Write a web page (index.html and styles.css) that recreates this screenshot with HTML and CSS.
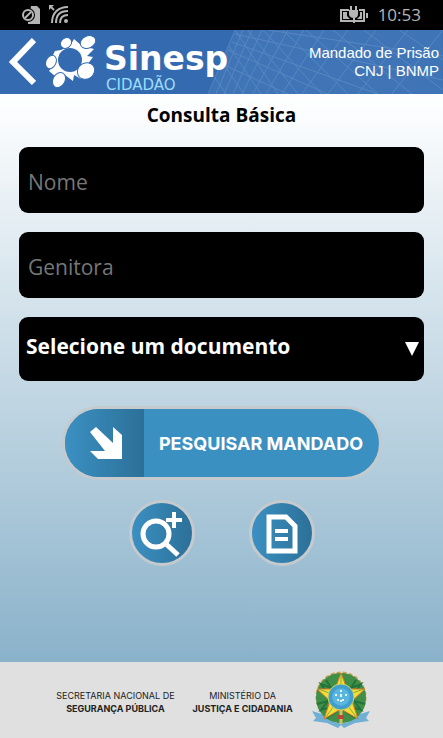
FILE: index.html
```
<!DOCTYPE html>
<html lang="pt-BR">
<head>
  <meta charset="UTF-8" />
  <meta name="viewport" content="width=device-width, initial-scale=1.0"/>
  <title>Sinesp Cidadão - Mandado de Prisão</title>
  <link rel="stylesheet" href="styles.css">
</head>
<body>
  <div class="status-bar">
    <svg class="status-icons" viewBox="0 0 48 20" width="48" height="20" aria-hidden="true">
      <path d="M9 1h6l3 3v15H6v-3z" fill="#b5b5b5"/>
      <circle cx="6" cy="10" r="7" fill="#000"/>
      <circle cx="6" cy="10" r="5" fill="none" stroke="#b5b5b5" stroke-width="2"/>
      <path d="M3 13l6-6" stroke="#b5b5b5" stroke-width="2"/>
      <g fill="none" stroke="#b5b5b5" stroke-width="2">
        <path d="M46 2C36 2 30 8 30 18"/>
        <path d="M46 6C38 6 34 10 34 18"/>
        <path d="M46 10C41 10 38 13 38 18"/>
        <path d="M28 1l4 4"/>
      </g>
      <path d="M27 0h5l-5 5z" fill="#b5b5b5"/>
      <circle cx="44" cy="16" r="2" fill="#b5b5b5"/>
    </svg>
    <div class="status-right">
      <svg viewBox="0 0 30 18" width="30" height="18" aria-hidden="true">
        <path d="M10 4H2v11h23V4h-5" fill="none" stroke="#b5b5b5" stroke-width="2"/>
        <path d="M4 6h4v4l3 3H4zM23 6h-2v4l-3 3h5z" fill="#b5b5b5"/>
        <path d="M10 4h9v4c0 3-2 4-4 4s-5-1-5-4zM11 0h2v5h-2zM16 0h2v5h-2zM14 11h2v6h-2zM27 7h2v5h-2z" fill="#b5b5b5"/>
      </svg>
      <span class="clock">10:53</span>
    </div>
  </div>

  <header class="header">
    <svg class="header-grid" viewBox="0 0 235 64" preserveAspectRatio="none" aria-hidden="true">
      <path d="M27 0h208v64H0z" fill="#4a80bd" opacity=".5"/>
      <g stroke="#8ab0d8" stroke-width="1" opacity=".3" fill="none">
        <path d="M27 0L0 64M35 0L8 64M44 0L16 64M54 0L25 64M66 0L34 64M80 0L45 64M96 0L58 64M116 0L74 64M140 0L94 64M168 0L120 64M200 0L150 64M235 0L184 64"/>
        <path d="M27 0L70 64M21 16L53 64M14 32L36 64M7 48L18 64M40 0L90 64M55 0L114 64M75 0L140 64M98 0L170 64M125 0L204 64M156 0L235 60M192 0L235 30"/>
        <path d="M27 4L235 50M24 12L170 64M20 20L120 64M14 34L80 64M60 0L235 26"/>
      </g>
    </svg>
    <a class="back" href="#" aria-label="Voltar">
      <svg viewBox="0 0 28 48" width="28" height="48" aria-hidden="true">
        <path d="M26 2L5 24l21 21" fill="none" stroke="#fff" stroke-width="6"/>
      </svg>
    </a>
    <a class="logo" href="#">
      <svg viewBox="0 0 50 54" width="50" height="54" aria-hidden="true">
        <path d="M9 16L15 15L24 11L28 4L36 11L48 14L41 21L47 22L41 30L35 44L28 40L27 46L19 40L9 41L3 36L8 30L6 22z" fill="#fff"/>
        <ellipse cx="24" cy="25" rx="12" ry="12" fill="#346bb0"/>
        <g fill="#fff" stroke="#346bb0" stroke-width="1">
          <ellipse cx="20" cy="8" rx="6" ry="5" transform="rotate(-40 20 8)"/>
          <ellipse cx="42" cy="7" rx="8" ry="6" transform="rotate(-25 42 7)"/>
          <ellipse cx="5" cy="27" rx="5" ry="7" transform="rotate(25 5 27)"/>
          <ellipse cx="40" cy="36" rx="9" ry="8" transform="rotate(-35 40 36)"/>
          <ellipse cx="13" cy="45" rx="6" ry="8" transform="rotate(30 13 45)"/>
        </g>
      </svg>
      <span class="logo-text">
        <span class="logo-name">Sinesp</span>
        <span class="logo-sub">CIDADÃO</span>
      </span>
    </a>
    <p class="header-info">Mandado de Prisão<br>CNJ | BNMP</p>
  </header>

  <main class="content">
    <h1>Consulta Básica</h1>
    <form class="search-form">
      <input type="text" id="nome" placeholder="Nome" aria-label="Nome">
      <input type="text" id="genitora" placeholder="Genitora" aria-label="Genitora">
      <div class="select-box">
        <select id="documento" aria-label="Documento">
          <option>Selecione um documento</option>
        </select>
        <svg class="arrow" viewBox="0 0 14 14" width="14" height="14" aria-hidden="true"><path d="M0 0h14L7 14z" fill="#fff"/></svg>
      </div>

      <button type="button" class="search-button">
        <span class="search-icon">
          <svg viewBox="0 0 34 34" width="34" height="34" aria-hidden="true">
            <path d="M1 6L7 1L24 17V1L33 9V33H9L1 25H16z" fill="#fff"/>
          </svg>
        </span>
        <span class="search-label">PESQUISAR MANDADO</span>
      </button>
    </form>

    <div class="actions">
      <button type="button" class="round-button" aria-label="Consulta avançada">
        <svg viewBox="0 0 60 60" width="60" height="60" aria-hidden="true">
          <g fill="none" stroke="#fff">
            <circle cx="24" cy="31" r="13" stroke-width="5"/>
            <path d="M33 40L46 52" stroke-width="5"/>
            <path d="M42 9v16M34 17h16" stroke-width="4"/>
          </g>
        </svg>
      </button>
      <button type="button" class="round-button" aria-label="Documentos">
        <svg viewBox="0 0 60 60" width="60" height="60" aria-hidden="true">
          <g fill="none" stroke="#fff">
            <path d="M17 14H34L43 23V48H17z" stroke-width="5"/>
            <path d="M23 28h13M23 36h13" stroke-width="4"/>
          </g>
        </svg>
      </button>
    </div>
  </main>

  <footer class="footer">
    <p>SECRETARIA NACIONAL DE<br><strong>SEGURANÇA PÚBLICA</strong></p>
    <p>MINISTÉRIO DA<br><strong>JUSTIÇA E CIDADANIA</strong></p>
    <svg viewBox="0 0 60 60" width="60" height="60" role="img" aria-label="Brasão da República">
      <path d="M1 41l10 3 14 9 5-3 5 3 14-9 10-3-4 7 3 3-14 2-11 5-3-3-3 3-11-5-14-2 3-3z" fill="#6fb0d4"/>
      <circle cx="30" cy="27" r="24" fill="#d7b948" stroke="#c9a050" stroke-width="3" stroke-dasharray="4 2"/>
      <circle cx="30" cy="28" r="19" fill="none" stroke="#3f8f48" stroke-width="12"/>
      <path d="M7 20l9 3-6-9 10 4-5-8M53 20l-9 3 6-9-10 4 5-8M6 34l11-3-7 9 10-3-3 10 8-5M54 34l-11-3 7 9-10-3 3 10-8-5" fill="none" stroke="#24733a" stroke-width="2"/>
      <path d="M30 3l6 16 18 0-13 12 6 18-17-10-17 10 6-18L6 19h18z" fill="#f4dd36" stroke="#d9752c"/>
      <path d="M30 4v20M7 19l23 8M53 19L30 27M14 48l16-21M46 48L30 27" stroke="#7fae3f" stroke-width="1"/>
      <circle cx="30" cy="27" r="13" fill="#419fcf" stroke="#c9d45a" stroke-width="1"/>
      <circle cx="30" cy="27" r="9" fill="#58b6df" stroke="#3f94c4" stroke-dasharray="1 2"/>
      <path d="M30 20v14M24 25h12M26 30h9" stroke="#e6f6fc" stroke-width="2" stroke-dasharray="2 3"/>
      <path d="M30 40v14" stroke="#d5c05c" stroke-width="3"/>
      <path d="M27 45h6v4h-6z" fill="#bd4534"/>
    </svg>
  </footer>
</body>
</html>
```
FILE: styles.css
```
* {
  box-sizing: border-box;
}
body {
  margin: 0;
  min-height: 100vh;
  display: flex;
  flex-direction: column;
  font-family: "Open Sans", "Noto Sans", sans-serif;
  background-color: #8ab2ca;
}
p, h1 { margin: 0; }
a { text-decoration: none; }

/* barra de status */
.status-bar {
  display: flex;
  justify-content: space-between;
  align-items: center;
  height: 30px;
  padding: 0 22px;
  background-color: #000;
  color: #b5b5b5;
}
.status-right {
  display: flex;
  align-items: center;
  gap: 9px;
}
.clock {
  font-size: 17px;
  line-height: 24px;
}

/* topo */
.header {
  position: relative;
  display: flex;
  align-items: center;
  height: 64px;
  padding: 0 4px 0 8px;
  background-color: #346bb0;
  color: #fff;
}
.header-grid {
  position: absolute;
  top: 0;
  right: 0;
  width: 53%;
  height: 100%;
}
.back, .logo, .header-info { position: relative; }
.back svg, .logo svg { display: block; }
.logo {
  display: flex;
  align-items: center;
  gap: 8px;
  margin-left: 10px;
  color: #fff;
}
.logo-text {
  display: flex;
  flex-direction: column;
  padding-top: 9px;
  font-family: "DejaVu Sans", sans-serif;
}
.logo-name {
  font-size: 33px;
  font-weight: bold;
  line-height: 36px;
}
.logo-sub {
  font-size: 15px;
  line-height: 16px;
  padding-left: 2px;
  color: #9bdcff;
}
.header-info {
  margin-left: auto;
  font-family: "Liberation Sans", Arial, sans-serif;
  font-size: 15px;
  line-height: 18px;
  text-align: right;
  white-space: nowrap;
}

/* consulta */
.content {
  flex: 1;
  padding: 6px 19px 24px;
  background: linear-gradient(#fff, #8ab2ca);
}
h1 {
  font-size: 19px;
  line-height: 30px;
  text-align: center;
}
.search-form {
  display: flex;
  flex-direction: column;
  gap: 19px;
  margin-top: 17px;
}
input, select {
  width: 100%;
  border: none;
  border-radius: 9px;
  background-color: #000;
  color: #fff;
  font-family: inherit;
}
input {
  height: 66px;
  padding: 3px 9px 0;
  font-size: 21px;
}
input::placeholder { color: #777; }
.select-box { position: relative; }
select {
  display: block;
  height: 64px;
  padding: 0 32px 6px 7px;
  font-size: 21px;
  font-weight: bold;
  appearance: none;
}
.arrow {
  position: absolute;
  top: 25px;
  right: 5px;
}
button {
  padding: 0;
  border: 3px solid #c4cacd;
  color: #fff;
  cursor: pointer;
}
.search-button {
  align-self: center;
  display: flex;
  align-items: stretch;
  width: 320px;
  height: 74px;
  margin-top: 6px;
  border-radius: 37px;
  background-color: #3b90c2;
  overflow: hidden;
}
.search-icon {
  display: flex;
  align-items: center;
  justify-content: center;
  width: 79px;
  padding-left: 4px;
  background: linear-gradient(to right, #3b90c2, #2c7098);
}
.search-label {
  flex: 1;
  align-self: center;
  font-family: Inter, sans-serif;
  font-size: 18px;
  font-weight: bold;
}
.actions {
  display: flex;
  justify-content: center;
  gap: 54px;
  margin-top: 20px;
}
.round-button {
  width: 66px;
  height: 66px;
  border-radius: 50%;
  background: linear-gradient(to right, #3b90c2, #2c7098);
}
.round-button svg { display: block; }

/* rodape */
.footer {
  display: flex;
  align-items: center;
  justify-content: center;
  gap: 18px;
  height: 76px;
  padding: 0 16px 0 0;
  background-color: #e0e0e0;
  color: #222;
}
.footer p {
  padding-top: 4px;
  font-family: Inter, sans-serif;
  font-size: 9px;
  line-height: 13px;
  text-align: center;
  white-space: nowrap;
}
```
